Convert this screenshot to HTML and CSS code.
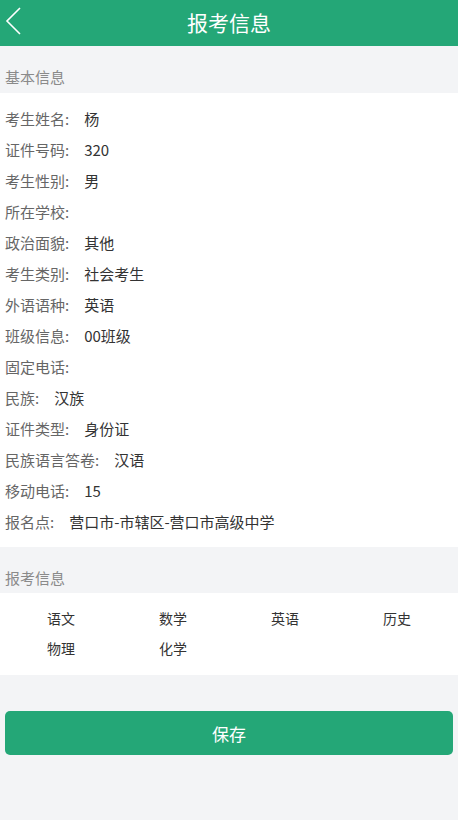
FILE: index.html
```html
<!DOCTYPE html>
<html lang="zh-CN">
<head>
<meta charset="utf-8">
<title>报考信息</title>
<link rel="stylesheet" href="styles.css">
</head>
<body>
<header class="topbar">
  <span class="back"><svg width="18" height="30" viewBox="0 0 18 30"><polyline points="16,2 3,15 16,28" fill="none" stroke="#fff" stroke-width="1.6"/></svg></span>
  <h1 class="title">报考信息</h1>
</header>
<div class="section-title">基本信息</div>
<div class="panel info">
  <div class="row"><span class="label">考生姓名:</span><span class="value">杨</span></div>
  <div class="row"><span class="label">证件号码:</span><span class="value">320</span></div>
  <div class="row"><span class="label">考生性别:</span><span class="value">男</span></div>
  <div class="row"><span class="label">所在学校:</span><span class="value"></span></div>
  <div class="row"><span class="label">政治面貌:</span><span class="value">其他</span></div>
  <div class="row"><span class="label">考生类别:</span><span class="value">社会考生</span></div>
  <div class="row"><span class="label">外语语种:</span><span class="value">英语</span></div>
  <div class="row"><span class="label">班级信息:</span><span class="value">00班级</span></div>
  <div class="row"><span class="label">固定电话:</span><span class="value"></span></div>
  <div class="row"><span class="label">民族:</span><span class="value">汉族</span></div>
  <div class="row"><span class="label">证件类型:</span><span class="value">身份证</span></div>
  <div class="row"><span class="label">民族语言答卷:</span><span class="value">汉语</span></div>
  <div class="row"><span class="label">移动电话:</span><span class="value">15</span></div>
  <div class="row"><span class="label">报名点:</span><span class="value">营口市-市辖区-营口市高级中学</span></div>
</div>
<div class="section-title">报考信息</div>
<div class="panel subjects">
  <span class="subject">语文</span>
  <span class="subject">数学</span>
  <span class="subject">英语</span>
  <span class="subject">历史</span>
  <span class="subject">物理</span>
  <span class="subject">化学</span>
</div>
<div class="actions">
  <button class="save">保存</button>
</div>
</body>
</html>
```
FILE: styles.css
```css
html, body {
  margin: 0;
  padding: 0;
}
body {
  width: 458px;
  min-height: 820px;
  background: #f3f4f6;
  font-family: "Noto Sans CJK SC", "Noto Sans", sans-serif;
}
.topbar {
  height: 46px;
  background: #24a777;
  display: flex;
  align-items: center;
  justify-content: center;
  position: relative;
}
.back {
  position: absolute;
  left: 4px;
  top: 6px;
  display: block;
  line-height: 0;
}
.title {
  margin: 0;
  color: #fff;
  font-size: 21px;
  font-weight: normal;
  line-height: 44px;
  padding-bottom: 2px;
}
.section-title {
  height: 47px;
  box-sizing: border-box;
  padding: 21px 0 0 5px;
  line-height: 20px;
  font-size: 15px;
  color: #8a8a8a;
}
.panel {
  background: #fff;
}
.info {
  padding: 10px 0;
}
.row {
  height: 31px;
  display: flex;
  align-items: center;
  padding-left: 5px;
  font-size: 15px;
}
.label {
  color: #666;
}
.value {
  color: #333;
  margin-left: 15px;
}
.subjects {
  display: grid;
  grid-template-columns: repeat(4, 112px);
  grid-auto-rows: 30px;
  padding: 10px 5px 12px;
  height: 60px;
  margin-top: -1px;
}
.subject {
  display: flex;
  align-items: center;
  justify-content: center;
  font-size: 14px;
  color: #333;
}
.actions {
  padding: 36px 5px 0;
}
.save {
  display: block;
  width: 100%;
  height: 44px;
  border: none;
  border-radius: 5px;
  background: #24a777;
  color: #fff;
  font-family: "Noto Sans CJK SC", "Noto Sans", sans-serif;
  font-size: 17px;
}
```
